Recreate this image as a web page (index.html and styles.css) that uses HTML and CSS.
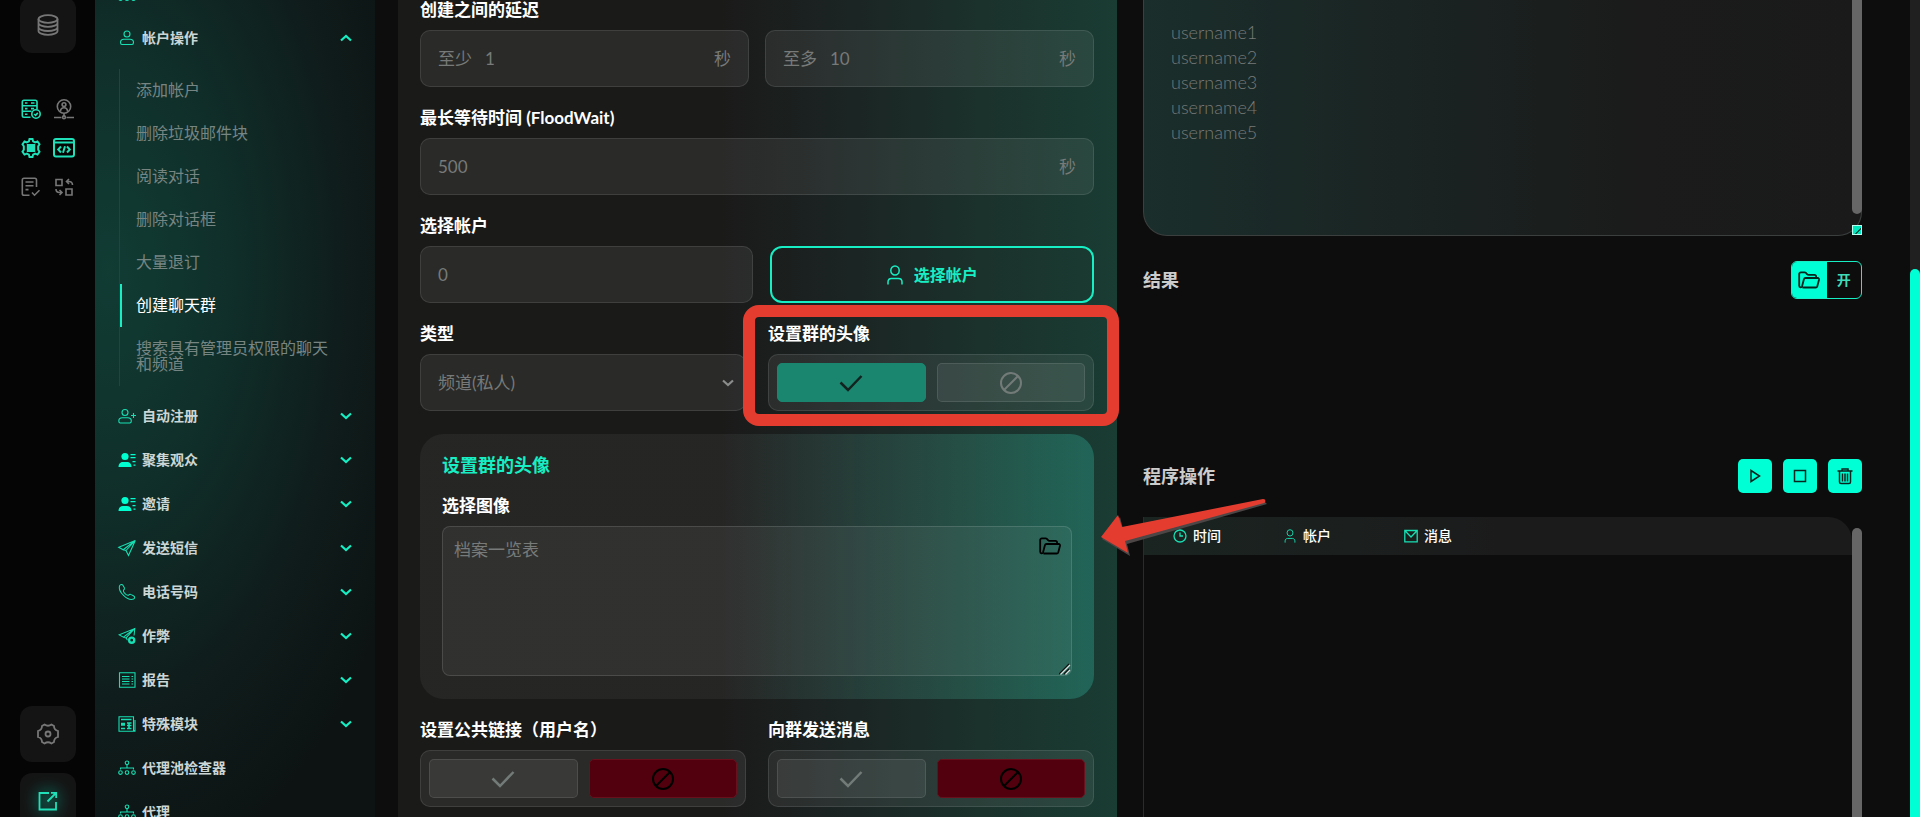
FILE: index.html
```html
<!DOCTYPE html>
<html lang="zh-CN">
<head>
    <meta charset="UTF-8">
    <meta name="viewport" content="width=device-width, initial-scale=1.0">
    <title>创建聊天群</title>
    <link rel="stylesheet" href="styles.css">
</head>
<body>

<svg class="sprite" aria-hidden="true">
    <symbol id="i-down" viewBox="0 0 12 8"><path d="M1 1.500l5 4.500 5-4.500"/></symbol>
    <symbol id="i-up" viewBox="0 0 12 8"><path d="M1 6.500L6 2l5 4.500"/></symbol>
    <symbol id="i-check" viewBox="0 0 24 18"><path d="M1.500 8.500l7.500 7.500L22.500 2"/></symbol>
    <symbol id="i-ban" viewBox="0 0 24 24"><circle cx="12" cy="12" r="10"/><path d="M5 19L19 5"/></symbol>
    <symbol id="i-user" viewBox="0 0 16 20"><ellipse cx="8" cy="5.500" rx="4.200" ry="4.500"/><path d="M1 19.500v-2.500c0-2 1.500-3.500 3.500-3.500h7c2 0 3.500 1.500 3.500 3.500v2.500"/></symbol>
    <symbol id="i-folder" viewBox="0 0 22 18"><path d="M4.500 16.500h13.200c.8 0 1.400-.5 1.600-1.200L21 8.700c.2-1-.4-1.700-1.300-1.700H7.500c-.8 0-1.400.5-1.600 1.200L4 15.500c-.3 1-2.800 1.300-2.800-.8V3c0-1 .7-1.700 1.700-1.700h3.800c.5 0 .9.200 1.200.5l1.300 1.500c.3.400.7.500 1.200.5h6c1 0 1.700.7 1.700 1.600V7"/></symbol>
    <symbol id="i-people" viewBox="0 0 18 16"><circle cx="7" cy="4.500" r="3.600"/><path d="M.5 15c0-3.500 2-5 4.500-5h4c2.500 0 4.500 1.500 4.500 5z"/><path d="M12.500 2h5v1.200h-5zM12.500 5h5v1.200h-5zM14.500 9h3v1.200h-3zM15.500 12.500h2v1.200h-2z"/></symbol>
    <symbol id="i-net" viewBox="0 0 18 16"><circle cx="9" cy="2.800" r="1.800"/><path d="M9 4.600v4M2.500 9.500V8h13v1.500"/><circle cx="2.500" cy="12.600" r="1.800"/><circle cx="9" cy="12.600" r="1.800"/><circle cx="15.500" cy="12.600" r="1.800"/></symbol>
</svg>

<div class="app">

    <aside class="rail">
        <div class="rail-top">
            <button class="rail-btn" aria-label="数据库">
                <svg class="icon" width="22" height="22" viewBox="0 0 22 22"><ellipse cx="11" cy="5" rx="9.500" ry="3.800"/><path d="M1.500 5v12c0 2.100 4.200 3.800 9.500 3.800s9.500-1.700 9.500-3.800V5M1.500 9c0 2.100 4.200 3.800 9.500 3.800s9.500-1.700 9.500-3.800M1.500 13.200c0 2.100 4.200 3.800 9.500 3.800s9.500-1.700 9.500-3.800"/></svg>
            </button>
            <div class="rail-grid">
                <svg class="icon on" viewBox="0 0 20 20"><path d="M16 10V3c0-1-.6-1.700-1.700-1.700H3C2 1.300 1.300 2 1.300 3v13.500c0 1 .7 1.700 1.700 1.700h6.500M1.300 6.800H16M1.300 12.300h9.200M4 4h2.500M4 9.600h2.500M4 15.200h2.500M10 4h3.500M10 9.600h3"/><circle cx="15" cy="15" r="4.200"/><path d="M13.200 15l1.400 1.300 2.200-2.400"/></svg>
                <svg class="icon" viewBox="0 0 20 20"><circle cx="10" cy="7.500" r="6.700"/><circle cx="10" cy="5.600" r="1.900"/><path d="M6.500 12.500c0-5 7-5 7 0M10 14.200V17M0 18.500h7.500M12.500 18.500H20"/><circle cx="10" cy="18.300" r="1.400"/></svg>
                <svg class="icon on thick" viewBox="0 0 20 20"><path d="M8.500 1h3l.6 2.400 2 1 2.400-1 2 2.800-1.300 2v3.600l1.300 2-2 2.800-2.400-1-2 1-.6 2.400h-3l-.6-2.400-2-1-2.400 1-2-2.800 1.300-2V8.200l-1.300-2 2-2.800 2.400 1 2-1z"/><path d="M6.800 7h6.400v2H6.800zM6.800 11h6.400v2H6.800z"/></svg>
                <svg class="icon on thick" viewBox="0 0 20 20"><rect x="0" y="1" width="20" height="17.500" rx="2"/><path d="M0 4.500h20M7 8.500l-2.800 3L7 14.500M13 8.500l2.800 3-2.800 3M11 8.200l-2 6.600"/></svg>
                <svg class="icon" viewBox="0 0 20 20"><path d="M15.500 10V3c0-1-.7-1.800-1.700-1.800H3C2 1.200 1.300 2 1.300 3v13.500c0 1 .7 1.800 1.700 1.800h5.500M4.500 5h8M4.500 8.800h8M4.500 12.600h3M11 15.500l2.500 2.700 5-5"/></svg>
                <svg class="icon" viewBox="0 0 20 20"><path d="M2 2.500h6v6H2zM12 12h6v6h-6zM18.500 8c0-2.300-1.500-3.500-3.500-3.500h-2.500M15 2l-2.500 2.500L15 7M2 12c0 2.300 1.500 3.500 3.500 3.500H8M5.500 13L8 15.500 5.500 18"/></svg>
            </div>
        </div>
        <div class="rail-bottom">
            <button class="rail-btn" aria-label="设置">
                <svg class="icon" width="22" height="22" viewBox="0 0 22 22"><path d="M7.500 1.500q3.500 2.500 7 0l2.500 1.500q0 4 4 5v6q-4 1-4 5l-2.500 1.500q-3.500-2.500-7 0L5 19q0-4-4-5V8q4-1 4-5z"/><circle cx="11" cy="11" r="2.500"/></svg>
            </button>
            <button class="rail-btn glow" aria-label="打开链接">
                <svg class="icon on" width="20" height="20" viewBox="0 0 20 20"><path d="M11 2H1.500v16.500H18V11M13 1.800h5.200V7M18 2l-8.500 8.500"/></svg>
            </button>
        </div>
    </aside>

    <nav class="sidebar">
        <a class="item" href="#" aria-label="帐户"><svg class="icon"><use href="#i-net"/></svg></a>
        <a class="item" href="#"><svg class="icon" viewBox="0 0 18 16"><circle cx="9" cy="4" r="3"/><path d="M2.500 12.500c0-2 1.500-3.200 3.500-3.200h6c2 0 3.500 1.200 3.500 3.200 0 1.500-.5 2-1.500 2H4c-1 0-1.500-.5-1.500-2z"/></svg><span>帐户操作</span><svg class="chev"><use href="#i-up"/></svg></a>
        <ul class="submenu">
            <li><a href="#">添加帐户</a></li>
            <li><a href="#">删除垃圾邮件块</a></li>
            <li><a href="#">阅读对话</a></li>
            <li><a href="#">删除对话框</a></li>
            <li><a href="#">大量退订</a></li>
            <li class="active"><a href="#">创建聊天群</a></li>
            <li><a href="#">搜索具有管理员权限的聊天和频道</a></li>
        </ul>
        <a class="item" href="#"><svg class="icon" viewBox="0 0 18 16"><circle cx="7" cy="4.500" r="3"/><path d="M.8 13c0-2 1.500-3.200 3.500-3.200h5.500c2 0 3.500 1.200 3.500 3.200 0 1.300-.5 2-1.500 2H2.300c-1 0-1.500-.7-1.500-2zM13 7.500h5M15.500 5v5"/></svg><span>自动注册</span><svg class="chev"><use href="#i-down"/></svg></a>
        <a class="item" href="#"><svg class="icon solid"><use href="#i-people"/></svg><span>聚集观众</span><svg class="chev"><use href="#i-down"/></svg></a>
        <a class="item" href="#"><svg class="icon solid"><use href="#i-people"/></svg><span>邀请</span><svg class="chev"><use href="#i-down"/></svg></a>
        <a class="item" href="#"><svg class="icon" viewBox="0 0 18 16"><path d="M17.300.5L.7 7.300l4.500 2.500L17.300.5 10.500 15.500 8 10.500zM5.200 9.800L8 10.500"/></svg><span>发送短信</span><svg class="chev"><use href="#i-down"/></svg></a>
        <a class="item" href="#"><svg class="icon" viewBox="0 0 18 17"><path d="M1 2C2 .2 4 .2 4.800 1.500l1.400 2.600c.5 1-.1 1.800-1 2.600-.5 2 3.200 5.800 5.300 5.300.9-1 2-1.300 3-.7l2.700 1.500c1.500 1 1 2.600-.2 3.200C10 18.500-.8 8.500 1 2z"/></svg><span>电话号码</span><svg class="chev"><use href="#i-down"/></svg></a>
        <a class="item" href="#"><svg class="icon" viewBox="0 0 18 17"><path d="M16.500 8L17.300.5.7 7.300l4.500 2.500L17.300.5 8 10.500l1.500 2.500M5.200 9.800L8 10.500"/><circle cx="14" cy="13" r="2.700" stroke-width="2.500"/></svg><span>作弊</span><svg class="chev"><use href="#i-down"/></svg></a>
        <a class="item" href="#"><svg class="icon" viewBox="0 0 18 16"><path d="M1.500.8h15.500v14.400H1.500z"/><path d="M4 4.500h7.500M4 7h7.500M4 9.500h7.500M4 12h7.500M13.500 4.500h1.500M13.500 7h1.500M13.500 9.500h1.500M13.500 12h1.500"/></svg><span>报告</span><svg class="chev"><use href="#i-down"/></svg></a>
        <a class="item" href="#"><svg class="icon" viewBox="0 0 18 16"><path d="M1 .8h14.500v13.700H17v.8H1zM17 4v11"/><path d="M3 3.500h10.500M3 7.500h4M3 9h4M9 7h4.500M9 9.500h4.500M3 12.500h4M9 12.500h4.500M11 6.500v6.500" stroke-width="1.600"/></svg><span>特殊模块</span><svg class="chev"><use href="#i-down"/></svg></a>
        <a class="item" href="#"><svg class="icon"><use href="#i-net"/></svg><span>代理池检查器</span></a>
        <a class="item" href="#"><svg class="icon"><use href="#i-net"/></svg><span>代理</span></a>
    </nav>

    <main class="content">
        <form class="form">
            <div class="field">
                <label class="title" for="delay-min">创建之间的延迟</label>
                <div class="row narrow">
                    <div class="box"><span>至少</span><input id="delay-min" type="text" placeholder="1"><span>秒</span></div>
                    <div class="box"><span>至多</span><input type="text" placeholder="10" aria-label="至多"><span>秒</span></div>
                </div>
            </div>

            <div class="field">
                <label class="title" for="flood">最长等待时间 (FloodWait)</label>
                <div class="box"><input id="flood" type="text" placeholder="500"><span>秒</span></div>
            </div>

            <div class="field">
                <label class="title" for="accounts">选择帐户</label>
                <div class="row accounts">
                    <div class="box"><input id="accounts" type="text" placeholder="0"></div>
                    <button class="pick" type="button"><svg class="icon"><use href="#i-user"/></svg>选择帐户</button>
                </div>
            </div>

            <div class="row">
                <div class="field">
                    <label class="title" for="type">类型</label>
                    <div class="select">
                        <select id="type"><option>频道(私人)</option></select>
                        <svg class="chev"><use href="#i-down"/></svg>
                    </div>
                </div>
                <div class="field marked">
                    <span class="title" id="t-avatar">设置群的头像</span>
                    <div class="toggle" role="radiogroup" aria-labelledby="t-avatar">
                        <label class="yes"><input type="radio" name="avatar" aria-label="是" checked><svg class="icon check"><use href="#i-check"/></svg></label>
                        <label class="no"><input type="radio" name="avatar" aria-label="否"><svg class="icon"><use href="#i-ban"/></svg></label>
                    </div>
                </div>
            </div>

            <section class="panel">
                <h2>设置群的头像</h2>
                <label class="title" for="files">选择图像</label>
                <div class="files">
                    <textarea id="files" placeholder="档案一览表"></textarea>
                    <button class="open" type="button" aria-label="打开文件夹"><svg class="icon"><use href="#i-folder"/></svg></button>
                    <svg class="grip" viewBox="0 0 12 12"><path class="dark" d="M0 11L10 1M5 11l5-5"/><path d="M1.500 11.500L11 2M6.500 11.500L11 7"/></svg>
                </div>
            </section>

            <div class="row">
                <div class="field">
                    <span class="title" id="t-link">设置公共链接（用户名）</span>
                    <div class="toggle" role="radiogroup" aria-labelledby="t-link">
                        <label class="yes"><input type="radio" name="link" aria-label="是"><svg class="icon check"><use href="#i-check"/></svg></label>
                        <label class="no"><input type="radio" name="link" aria-label="否" checked><svg class="icon"><use href="#i-ban"/></svg></label>
                    </div>
                </div>
                <div class="field">
                    <span class="title" id="t-msg">向群发送消息</span>
                    <div class="toggle" role="radiogroup" aria-labelledby="t-msg">
                        <label class="yes"><input type="radio" name="msg" aria-label="是"><svg class="icon check"><use href="#i-check"/></svg></label>
                        <label class="no"><input type="radio" name="msg" aria-label="否" checked><svg class="icon"><use href="#i-ban"/></svg></label>
                    </div>
                </div>
            </div>
        </form>

        <div class="side">
            <div class="users">
                <textarea aria-label="用户名" placeholder="username1
username2
username3
username4
username5"></textarea>
                <span class="thumb"></span>
                <span class="corner"></span>
            </div>

            <div class="head">
                <h3>结果</h3>
                <button class="result" type="button"><span class="pic"><svg class="icon"><use href="#i-folder"/></svg></span><span class="txt">开</span></button>
            </div>

            <div class="head actions">
                <h3>程序操作</h3>
                <div class="btns">
                    <button type="button" aria-label="开始"><svg class="icon" viewBox="0 0 16 16"><path d="M4 2.500v11l8.500-5.500z"/></svg></button>
                    <button type="button" aria-label="停止"><svg class="icon" viewBox="0 0 16 16"><path d="M2.500 2.500h11v11h-11z"/></svg></button>
                    <button type="button" aria-label="删除"><svg class="icon" viewBox="0 0 16 16"><path d="M.5 3h15M5 3V1h6v2M2.500 3.500V14c0 1 .5 1.500 1.500 1.500h8c1 0 1.500-.5 1.500-1.500V3.500M5.500 5.500v8M8 5.500v8M10.500 5.500v8"/></svg></button>
                </div>
            </div>

            <div class="log">
                <table>
                    <thead>
                        <tr>
                            <th><svg class="icon" viewBox="0 0 14 14"><circle cx="7" cy="7" r="6"/><path d="M7 3.500V7h3"/></svg>时间</th>
                            <th><svg class="icon"><use href="#i-user"/></svg>帐户</th>
                            <th><svg class="icon" viewBox="0 0 14 14"><path d="M.8 1.500h12.400v11.300H.8zM.8 1.500L7 8l6.200-6.500"/></svg>消息</th>
                        </tr>
                    </thead>
                </table>
                <span class="thumb"></span>
            </div>
        </div>
    </main>

    <div class="scrollbar"><span></span></div>
</div>

<svg class="arrow" viewBox="0 0 168 58"><path class="shadow" d="M2 40L20 18l3 12L164 2l3 3L27 45l3 12z"/><path d="M1 38L18 16l4 12L163 0c3 0 3 3 1 4L25 42l3 12z"/></svg>

</body>
</html>
```
FILE: styles.css
```css
*, *::before, *::after {
  box-sizing: border-box;
}

body {
  margin: 0;
  height: 100vh;
  overflow: hidden;
  position: relative;
  background: #0d0d0e;
  color: #fff;
  font: 17px/20px Lato, "Noto Sans CJK SC", sans-serif;
}

button, input, select, textarea {
  font: inherit;
  color: inherit;
  border: none;
  background: none;
  outline: none;
  padding: 0;
  margin: 0;
}

button {
  cursor: pointer;
}

.sprite {
  display: none;
}

.icon, .chev {
  display: block;
  flex: none;
  overflow: visible;
  fill: none;
  stroke: currentColor;
  stroke-width: 1.5;
}

.app {
  display: grid;
  grid-template-columns: 95px 280px 1fr 10px;
  grid-template-rows: 100vh;
  height: 100vh;
  overflow: hidden;
}

/* left rail */
.rail {
  display: flex;
  flex-direction: column;
  justify-content: space-between;
  align-items: flex-start;
  padding: 0 20px;
  margin: -3px 0 -12px;
  background: #050505;
  color: #777;
}

.rail-btn {
  display: grid;
  place-items: center;
  width: 56px;
  height: 56px;
  border-radius: 12px;
  background: #141414;
}

.rail .icon {
  stroke-width: 1.8;
}

.rail .on {
  color: #1fe0b8;
}

.glow .icon {
  filter: drop-shadow(0 0 8px #00ffd4);
}

.rail-grid {
  display: grid;
  grid-template-columns: 20px 20px;
  gap: 19px 13px;
  padding: 46px 1px 0;
}

.rail-grid .icon {
  width: 20px;
  height: 20px;
  stroke-width: 1.6;
}

.rail-grid .thick {
  stroke-width: 2;
}

.rail-bottom {
  display: grid;
  gap: 11px;
}

/* menu */
.sidebar {
  padding: 0 23px;
  overflow: hidden;
  background: radial-gradient(ellipse 300px 560px at 5% 33%, #103c34 0%, #102f2a 40%, #0f1c1b 80%, #0d1313 110%);
}

.item {
  display: flex;
  align-items: center;
  gap: 6px;
  height: 44px;
  color: #ccd6d4;
  font-size: 14px;
  font-weight: 700;
  text-decoration: none;
}

.item:first-child {
  margin-top: -28px;
}

.item .icon {
  width: 18px;
  height: 16px;
  color: #17dfb3;
  stroke-width: 1.1;
}

.item .solid {
  fill: #00ffd0;
  stroke: none;
}

.chev {
  width: 12px;
  height: 8px;
  margin-left: auto;
  stroke-width: 2.2;
}

.item .chev {
  color: #17eec3;
}

.submenu {
  list-style: none;
  margin: 9px 14px 8px 1px;
  padding: 0;
  border-left: 1px solid #22443d;
}

.submenu li {
  padding: 13px 0 14px 14px;
  border-left: 2px solid transparent;
  font-size: 16px;
  line-height: 16px;
}

.submenu a {
  color: #778582;
  text-decoration: none;
}

.submenu .active {
  border-left-color: #17eec3;
}

.submenu .active a {
  color: #fff;
}

/* content */
.content {
  display: grid;
  grid-template-columns: minmax(0, 1fr) minmax(0, 1fr);
  gap: 26px;
  padding: 0 48px 0 23px;
  min-width: 0;
}

.form {
  display: flex;
  flex-direction: column;
  gap: 21px;
  padding: 0 23px 0 22px;
  background: linear-gradient(90deg, #1a1a19 0%, #1a1a19 45%, #1b2322 60%, #1b322c 82%, #193c33 100%);
}

.row {
  display: grid;
  grid-template-columns: minmax(0, 1fr) minmax(0, 1fr);
  gap: 22px;
}

.row.narrow {
  gap: 16px;
}

.row.accounts {
  grid-template-columns: minmax(0, 34fr) minmax(0, 33fr);
  gap: 17px;
}

.title {
  display: block;
  margin-bottom: 10px;
  font-weight: 700;
}

.box, .select select, .toggle {
  height: 57px;
  border: 1px solid rgba(255, 255, 255, .1);
  border-radius: 10px;
  background: rgba(255, 255, 255, .07);
}

.box {
  display: flex;
  align-items: center;
  gap: 13px;
  padding: 0 17px;
  color: #777a78;
}

.box input {
  flex: 1;
  min-width: 0;
}

::placeholder {
  color: #777a78;
  opacity: 1;
}

.pick {
  display: flex;
  justify-content: center;
  align-items: center;
  gap: 11px;
  height: 57px;
  border: 2px solid #17eec3;
  border-radius: 12px;
  color: #17eec3;
  font-size: 16px;
  font-weight: 700;
}

.pick .icon {
  width: 16px;
  height: 20px;
}

.select {
  display: grid;
  align-items: center;
  position: relative;
}

.select select {
  appearance: none;
  width: 100%;
  padding: 0 17px;
  color: #777a78;
}

.select .chev {
  position: absolute;
  right: 12px;
  color: #8a8d8b;
}

.toggle {
  display: grid;
  grid-template-columns: 1fr 1fr;
  gap: 11px;
  padding: 8px;
}

.toggle label {
  display: grid;
  place-items: center;
  position: relative;
  border: 1px solid rgba(255, 255, 255, .1);
  border-radius: 5px;
  background: rgba(255, 255, 255, .07);
  color: #737b79;
}

.toggle input {
  appearance: none;
  position: absolute;
  inset: 0;
}

.toggle .icon {
  width: 24px;
  height: 24px;
  stroke-width: 2;
}

.toggle .check {
  height: 18px;
  stroke-width: 2.5;
}

.toggle .yes:has(:checked) {
  background: #1b8670;
  border-color: #1b8670;
  color: #12231f;
}

.toggle .no:has(:checked) {
  background: #52000d;
  border-color: #69101d;
  color: #000;
}

/* red frame drawn around the field */
.marked {
  position: relative;
}

.marked::after {
  content: "";
  position: absolute;
  inset: -19px -25px -15px -25px;
  border: 12px solid #e43d30;
  border-radius: 16px;
  pointer-events: none;
}

.panel {
  margin: 2px 0 0;
  padding: 21px 22px 23px;
  border-radius: 24px;
  background: linear-gradient(90deg, rgba(255, 255, 255, .05) 0%, rgba(255, 255, 255, .05) 45%, rgba(60, 150, 130, .3) 80%, rgba(45, 165, 145, .4) 100%);
}

.panel h2 {
  margin: 0 0 21px;
  color: #17eec3;
  font-size: 18px;
  line-height: 20px;
}

.files {
  position: relative;
}

.files textarea {
  display: block;
  width: 100%;
  height: 150px;
  padding: 13px 11px;
  border: 1px solid rgba(255, 255, 255, .13);
  border-radius: 8px;
  background: rgba(255, 255, 255, .05);
  resize: none;
}

.open {
  position: absolute;
  top: 11px;
  right: 11px;
  color: #000;
}

.open .icon, .result .icon {
  width: 22px;
  height: 18px;
  stroke-width: 1.8;
}

.grip {
  position: absolute;
  right: 1px;
  bottom: 1px;
  width: 12px;
  height: 12px;
  stroke: #d5e2df;
  stroke-width: 1.2;
}

.grip .dark {
  stroke: #111;
}

/* right column */
.users {
  position: relative;
  height: 236px;
}

.users textarea {
  display: block;
  width: 100%;
  height: 100%;
  padding: 20px 27px;
  border: 1px solid #3b403f;
  border-top: none;
  border-radius: 0 0 24px 24px;
  background: linear-gradient(90deg, #1a2e2b 0%, #1a2322 40%, #1a1b1a 70%, #1a1a1b 100%);
  font-size: 18px;
  font-weight: 300;
  line-height: 25px;
  resize: none;
}

.thumb {
  position: absolute;
  right: 0;
  width: 10px;
  border-radius: 5px;
  background: #666;
}

.users .thumb {
  top: -10px;
  height: 224px;
}

.corner {
  position: absolute;
  right: 0;
  bottom: 1px;
  width: 10px;
  height: 10px;
  border: 1px solid #b8fff2;
  background: linear-gradient(135deg, #00e6bd 60%, #0a5a4c 60%, #0a5a4c 75%, #00e6bd 75%);
}

.head {
  display: flex;
  justify-content: space-between;
  align-items: center;
  height: 38px;
  margin-top: 25px;
}

.head h3 {
  margin: 0;
  color: #ccc;
  font-size: 18px;
  font-weight: 700;
}

.head.actions {
  margin-top: 158px;
}

.result {
  display: flex;
  width: 71px;
  height: 38px;
  border: 1px solid #17eec3;
  border-radius: 6px;
  overflow: hidden;
  color: #3fdcb9;
  font-size: 14px;
  font-weight: 700;
}

.result span {
  display: grid;
  place-items: center;
  flex: 1;
  height: 100%;
}

.result .pic {
  background: #00ffd4;
  color: #07251f;
}

.btns {
  display: flex;
  gap: 11px;
}

.btns button {
  display: grid;
  place-items: center;
  width: 34px;
  height: 34px;
  border-radius: 5px;
  background: #00ffd4;
  color: #07251f;
}

.btns .icon {
  width: 16px;
  height: 16px;
}

.log {
  position: relative;
  height: 400px;
  margin-top: 22px;
  border-left: 1px solid #2b2b2c;
  border-radius: 0 24px 0 0;
}

.log table {
  width: calc(100% - 10px);
  table-layout: fixed;
  border-collapse: collapse;
  border-radius: 0 24px 0 0;
  background: linear-gradient(90deg, #1a2421 0%, #1b1f1e 30%, #1b1b1c 50%);
}

.log th {
  width: 121px;
  height: 38px;
  padding: 0;
  font-size: 14px;
  font-weight: 500;
  text-align: left;
}

.log th:first-child {
  width: 139px;
  padding-left: 29px;
}

.log th:last-child {
  width: auto;
}

.log th .icon {
  display: inline-block;
  width: 14px;
  height: 14px;
  margin-right: 6px;
  vertical-align: -2px;
  color: #17dfb3;
  stroke-width: 1.3;
}

.log .thumb {
  top: 11px;
  bottom: 0;
}

/* page scrollbar */
.scrollbar {
  display: flex;
  padding-top: 269px;
  background: #202021;
}

.scrollbar span {
  flex: 1;
  border-radius: 5px 5px 0 0;
  background: #00ffd4;
}

.arrow {
  position: absolute;
  top: 499px;
  left: 1100px;
  width: 168px;
  height: 58px;
  fill: #e43d30;
}

.arrow .shadow {
  fill: #4d4646;
}
```
